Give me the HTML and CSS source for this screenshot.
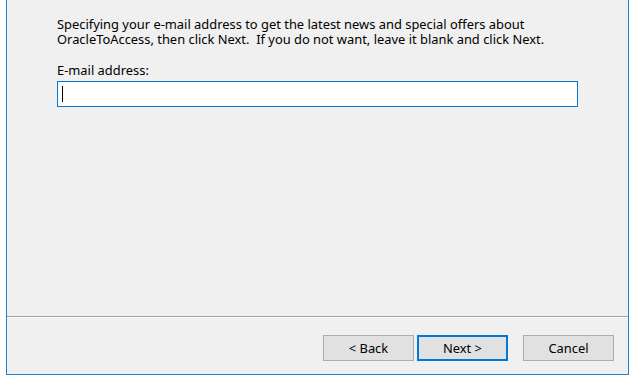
FILE: index.html
```html
<!DOCTYPE html>
<html lang="en">

<head>
    <meta charset="UTF-8">
    <meta name="viewport" content="width=device-width, initial-scale=1.0">
    <title>OracleToAccess Setup</title>
    <link rel="stylesheet" href="styles.css">
</head>

<body>

    <div class="window">
        <div class="page">
            <p class="intro">
                <span class="line">Specifying your e-mail address to get the latest news and special offers about</span>
                <span class="line">OracleToAccess, then click Next.&nbsp; If you do not want, leave it blank and click Next.</span>
            </p>
            <label class="field-label" for="email">E-mail address:</label>
            <div class="text-box">
                <span class="caret"></span>
                <input id="email" type="text">
            </div>
        </div>

        <div class="separator"></div>

        <div class="footer">
            <button class="btn">&lt; Back</button>
            <button class="btn btn-default">Next &gt;</button>
            <button class="btn btn-cancel">Cancel</button>
        </div>
    </div>

</body>

</html>
```

FILE: styles.css
```css
body {
    margin: 0;
    background: #ffffff;
    font-family: "Noto Sans", "Open Sans", sans-serif;
    font-size: 12.9px;
    color: #000;
}

.window {
    display: flex;
    flex-direction: column;
    box-sizing: border-box;
    width: 623px;
    height: 375px;
    margin-left: 6px;
    background: #f0f0f0;
    border: 1px solid #1883d7;
    border-top: none;
}

.page {
    flex: 1;
    padding: 17px 50px 0 50px;
}

.intro {
    margin: 0 0 16px 0;
}

.line {
    display: block;
    height: 15px;
    line-height: 15px;
    white-space: nowrap;
}

.field-label {
    display: block;
    line-height: 15px;
    margin-bottom: 3px;
}

.text-box {
    position: relative;
    box-sizing: border-box;
    width: 521px;
    height: 26px;
    background: #fff;
    border: 1px solid #0078d7;
}

.text-box input {
    width: 100%;
    height: 100%;
    box-sizing: border-box;
    border: none;
    outline: none;
    background: transparent;
    padding: 0 4px;
}

.caret {
    position: absolute;
    left: 4px;
    top: 4px;
    width: 1px;
    height: 16px;
    background: #000;
}

.separator {
    border-top: 1px solid #a0a0a0;
    border-bottom: 1px solid #ffffff;
}

.footer {
    display: flex;
    justify-content: flex-end;
    padding: 17px 14px 13px 0;
}

.btn {
    box-sizing: border-box;
    width: 91px;
    height: 26px;
    margin: 0 0 0 3px;
    padding: 0;
    background: #e1e1e1;
    border: 1px solid #adadad;
    font-family: inherit;
    font-size: 12.9px;
    color: #000;
}

.btn-default {
    border: 2px solid #0078d7;
}

.btn-cancel {
    margin-left: 15px;
}
```
